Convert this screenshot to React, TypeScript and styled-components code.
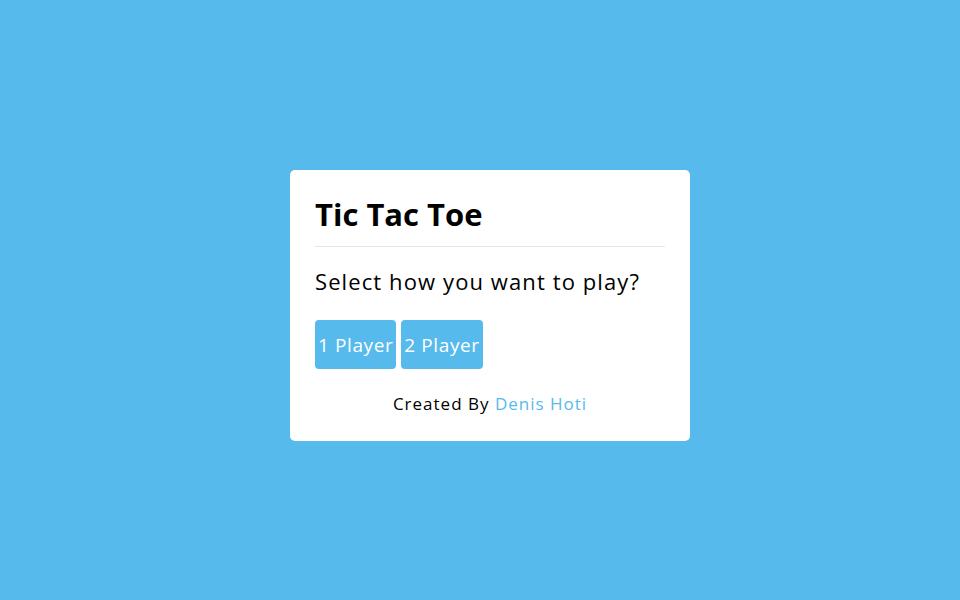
import styled, { createGlobalStyle } from "styled-components";

const GlobalStyle = createGlobalStyle`
	html, body {
		margin: 0;
		padding: 0;
		background: #56baed;
		font-family: "Open Sans", "Liberation Sans", sans-serif;
	}
`;

const Page = styled.div`
	min-height: 100vh;
	box-sizing: border-box;
	display: flex;
	justify-content: center;
	align-items: center;
	padding: 11px 0 0 20px;
`;

const Card = styled.div`
	width: 400px;
	box-sizing: border-box;
	background: #fff;
	border-radius: 5px;
	padding: 20px 25px 25px;
`;

const Title = styled.h1`
	margin: 0;
	font-size: 31px;
	font-weight: 700;
	line-height: 48px;
	color: #000;
	padding-bottom: 8px;
	border-bottom: 1px solid #e6e6e6;
`;

const Question = styled.p`
	margin: 18px 0 0;
	font-size: 22px;
	font-weight: 500;
	letter-spacing: 1.1px;
	line-height: 32px;
	color: #000;
`;

const Options = styled.div`
	display: flex;
	gap: 5px;
	margin-top: 23px;
`;

const ModeButton = styled.button`
	height: 49px;
	padding: 0 3px;
	border: none;
	border-radius: 4px;
	background: #56baed;
	color: #fff;
	font-family: inherit;
	font-size: 19px;
	letter-spacing: 0.6px;
	cursor: pointer;
`;

const Footer = styled.p`
	margin: 23px 0 0;
	text-align: center;
	font-size: 17px;
	font-weight: 500;
	letter-spacing: 1px;
	line-height: 24px;
	color: #000;
	a {
		color: #56baed;
		text-decoration: none;
	}
`;

export default function App() {
	return (
		<>
			<GlobalStyle />
			<Page>
				<Card>
					<Title>Tic Tac Toe</Title>
					<Question>Select how you want to play?</Question>
					<Options>
						<ModeButton>1 Player</ModeButton>
						<ModeButton>2 Player</ModeButton>
					</Options>
					<Footer>
						Created By <a href="#">Denis Hoti</a>
					</Footer>
				</Card>
			</Page>
		</>
	);
}
